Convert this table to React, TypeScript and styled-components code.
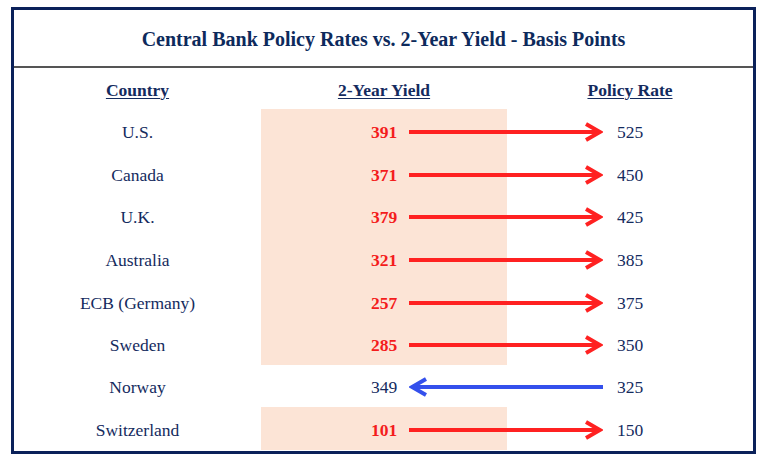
import React from 'react';
import styled, { createGlobalStyle } from 'styled-components';

const GlobalStyle = createGlobalStyle`
  html, body {
    margin: 0;
    padding: 0;
    background: #ffffff;
  }
  body {
    font-family: 'Liberation Serif', 'DejaVu Serif', serif;
  }
`;

const Page = styled.div`
  width: 769px;
  height: 464px;
  padding: 7px 0 0 11px;
  box-sizing: border-box;
`;

const Frame = styled.div`
  width: 745px;
  height: 447px;
  box-sizing: border-box;
  border: 3px solid #0b215a;
  display: flex;
  flex-direction: column;
`;

const TitleBar = styled.div`
  height: 58px;
  display: flex;
  align-items: center;
  justify-content: center;
  border-bottom: 2px solid #555555;
  box-sizing: border-box;
  padding-top: 2px;
`;

const Title = styled.h1`
  margin: 0;
  font-size: 20px;
  font-weight: 700;
  color: #0d2a5c;
  letter-spacing: 0px;
`;

const Table = styled.div`
  display: flex;
  flex-direction: column;
`;

const Row = styled.div<{ h: number }>`
  position: relative;
  display: grid;
  grid-template-columns: 247px 246px 246px;
  height: ${p => p.h}px;
`;

const Cell = styled.div<{ shaded?: boolean; hot?: boolean; head?: boolean }>`
  display: flex;
  align-items: center;
  justify-content: center;
  padding-top: 3px;
  background: ${p => (p.shaded ? '#fce4d6' : 'transparent')};
  color: ${p => (p.hot ? '#f41c1c' : '#142b5e')};
  font-size: ${p => (p.head ? '17.5px' : '17.5px')};
  font-weight: ${p => (p.hot || p.head ? 700 : 400)};
  text-decoration: ${p => (p.head ? 'underline' : 'none')};
  text-underline-offset: 2px;
  text-decoration-thickness: 1px;
`;

const ArrowWrap = styled.div`
  position: absolute;
  left: 395px;
  top: 50%;
  width: 194px;
  height: 20px;
  margin-top: -9px;
  pointer-events: none;
`;

const Arrow = ({ dir }: { dir: 'right' | 'left' }) => {
  const color = dir === 'right' ? '#ff2121' : '#3450ec';
  const w = 194;
  return (
    <ArrowWrap>
      <svg width={w} height={20} viewBox={`0 0 ${w} 20`}>
        {dir === 'right' ? (
          <>
            <line x1={0} y1={10} x2={w - 3} y2={10} stroke={color} strokeWidth={4} />
            <polyline points={`${w - 17},2 ${w - 3},10 ${w - 17},18`} fill="none" stroke={color} strokeWidth={4} />
          </>
        ) : (
          <>
            <line x1={3} y1={10} x2={w} y2={10} stroke={color} strokeWidth={4} />
            <polyline points={`17,2 3,10 17,18`} fill="none" stroke={color} strokeWidth={4} />
          </>
        )}
      </svg>
    </ArrowWrap>
  );
};

const rows = [
  { country: 'U.S.', yld: 391, policy: 525 },
  { country: 'Canada', yld: 371, policy: 450 },
  { country: 'U.K.', yld: 379, policy: 425 },
  { country: 'Australia', yld: 321, policy: 385 },
  { country: 'ECB (Germany)', yld: 257, policy: 375 },
  { country: 'Sweden', yld: 285, policy: 350 },
  { country: 'Norway', yld: 349, policy: 325 },
  { country: 'Switzerland', yld: 101, policy: 150 },
];

const heights = [43, 43, 42, 43, 43, 42, 42, 43];

export default function App() {
  return (
    <Page>
      <GlobalStyle />
      <Frame>
        <TitleBar>
          <Title>Central Bank Policy Rates vs. 2-Year Yield - Basis Points</Title>
        </TitleBar>
        <Table>
          <Row h={41}>
            <Cell head>Country</Cell>
            <Cell head>2-Year Yield</Cell>
            <Cell head>Policy Rate</Cell>
          </Row>
          {rows.map((r, i) => {
            const up = r.policy > r.yld;
            return (
              <Row key={r.country} h={heights[i]}>
                <Cell>{r.country}</Cell>
                <Cell shaded={up} hot={up}>{r.yld}</Cell>
                <Cell>{r.policy}</Cell>
                <Arrow dir={up ? 'right' : 'left'} />
              </Row>
            );
          })}
        </Table>
      </Frame>
    </Page>
  );
}
